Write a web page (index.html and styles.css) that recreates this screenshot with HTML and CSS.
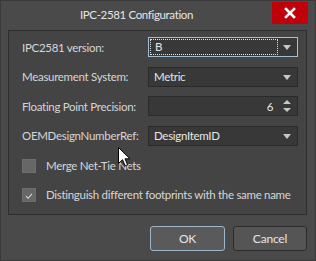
FILE: index.html
```html
<!DOCTYPE html>
<html lang="en">

<head>
    <meta charset="UTF-8">
    <title>IPC-2581 Configuration</title>
    <link rel="stylesheet" href="styles.css">
</head>

<body>
    <div class="window">
        <div class="titlebar">
            <div class="title">IPC-2581 Configuration</div>
            <button class="close-btn" aria-label="Close">
                <svg width="12" height="12" viewBox="0 0 12 12">
                    <path d="M2 2 L10 10 M10 2 L2 10" stroke="white" stroke-width="2.6" stroke-linecap="square" />
                </svg>
            </button>
        </div>

        <div class="panel">
            <div class="form-grid">
                <label>IPC2581 version:</label>
                <div class="combo focused">
                    <span class="focus-ring">B</span>
                    <span class="arrow"></span>
                </div>

                <label>Measurement System:</label>
                <div class="combo">
                    <span class="value">Metric</span>
                    <span class="arrow"></span>
                </div>

                <label>Floating Point Precision:</label>
                <div class="combo spin">
                    <span class="value num">6</span>
                    <span class="spin-arrows">
                        <span class="up"></span>
                        <span class="down"></span>
                    </span>
                </div>

                <label>OEMDesignNumberRef:</label>
                <div class="combo">
                    <span class="value">DesignItemID</span>
                    <span class="arrow"></span>
                </div>
            </div>

            <div class="checks">
                <div class="check-row">
                    <span class="box"></span>
                    <span>Merge Net-Tie Nets</span>
                </div>
                <div class="check-row">
                    <span class="box">
                        <svg width="14" height="14" viewBox="0 0 14 14">
                            <path d="M3.5 7.2 L6 9.6 L10.5 4.5" fill="none" stroke="#d8d8d8" stroke-width="1.2" />
                        </svg>
                    </span>
                    <span>Distinguish different footprints with the same name</span>
                </div>
            </div>
        </div>

        <div class="buttons">
            <button class="btn default">OK</button>
            <button class="btn">Cancel</button>
        </div>

        <!-- mouse pointer sitting over the dialog -->
        <svg class="cursor" width="13" height="20" viewBox="0 0 13 20">
            <path d="M0.5 0.5 L0.5 16.5 L4.5 12.7 L7.2 18.8 L9.6 17.8 L7 11.8 L12 11.8 Z" fill="white" stroke="black" stroke-width="1" />
        </svg>
    </div>
</body>
</html>
```

FILE: styles.css
```css
body {
    margin: 0;
    font-family: Lato, 'Noto Sans', sans-serif;
    font-size: 11.5px;
    letter-spacing: -0.3px;
    background-color: #4a4a4a;
    color: #dadada;
    white-space: nowrap;
}

.window {
    position: relative;
    width: 316px;
    height: 261px;
    box-sizing: border-box;
    border: 1px solid #3a3a3a;
    background-color: #4a4a4a;
    display: flex;
    flex-direction: column;
}

.titlebar {
    height: 29px;
    display: flex;
    align-items: flex-start;
    padding-right: 7px;
}

.title {
    flex: 1;
    text-align: center;
    font-size: 11.5px;
    letter-spacing: -0.35px;
    color: #e6e6e6;
    line-height: 28px;
}

.close-btn {
    width: 36px;
    height: 22px;
    margin-top: 1px;
    border: none;
    padding: 0;
    background-color: #c0000b;
    display: flex;
    align-items: center;
    justify-content: center;
}

/* grouped options */
.panel {
    height: 185px;
    box-sizing: border-box;
    margin: 0 8px 0 7px;
    border: 1px solid #2e2e2e;
    background-color: #444444;
    padding: 6px 8px 0 13px;
}

.form-grid {
    display: grid;
    grid-template-columns: 126px 150px;
    grid-auto-rows: 20px;
    row-gap: 9.6px;
    align-items: center;
}

label {
    color: #d6d6d6;
}

.combo {
    height: 20px;
    box-sizing: border-box;
    border: 1px solid #2a2a2a;
    background-color: #383838;
    display: flex;
    align-items: center;
    padding: 0 6px 0 5px;
    color: #e6e6e6;
}

.combo.focused {
    border-color: #a3bfd6;
    padding-left: 1px;
}

.focus-ring {
    flex: 1;
    height: 16px;
    box-sizing: border-box;
    outline: 1px dotted #e0e0e0;
    outline-offset: -1px;
    padding-left: 5px;
    line-height: 16px;
    margin-right: 5px;
}

.value {
    flex: 1;
}

.value.num {
    text-align: right;
    padding-right: 10px;
}

.arrow {
    width: 0;
    height: 0;
    border-left: 4.5px solid transparent;
    border-right: 4.5px solid transparent;
    border-top: 5px solid #c8c8c8;
    margin-top: 1px;
}

.spin-arrows {
    display: flex;
    flex-direction: column;
    gap: 4px;
}

.spin-arrows .up {
    border-left: 4.5px solid transparent;
    border-right: 4.5px solid transparent;
    border-bottom: 4px solid #c8c8c8;
}

.spin-arrows .down {
    border-left: 4.5px solid transparent;
    border-right: 4.5px solid transparent;
    border-top: 4px solid #c8c8c8;
}

.checks {
    margin-top: 13px;
    display: flex;
    flex-direction: column;
    gap: 15px;
}

.check-row {
    display: flex;
    align-items: center;
    gap: 10px;
    height: 14px;
    color: #d6d6d6;
}

.box {
    width: 14px;
    height: 14px;
    box-sizing: border-box;
    background-color: #676767;
    border: 1px solid #6e6e6e;
    display: flex;
}

.buttons {
    display: flex;
    justify-content: flex-end;
    gap: 8px;
    padding: 11px 8px 0 0;
}

.btn {
    width: 74px;
    height: 25px;
    border: 1px solid #2c2c2c;
    border-radius: 3px;
    background-color: #555555;
    color: #e6e6e6;
    font-family: Lato, 'Noto Sans', sans-serif;
    font-size: 12px;
    letter-spacing: -0.2px;
}

.btn.default {
    width: 75px;
    border-color: #9cb6cc;
    background-color: #5a5a5a;
}

.cursor {
    position: absolute;
    left: 117px;
    top: 146px;
}
```
